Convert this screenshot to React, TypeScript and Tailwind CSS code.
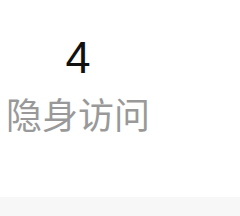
export default function App() {
  return (
    <div className="flex h-[216px] w-[240px] flex-col bg-white">
      <div className="flex h-[197px] flex-col">
        <div className="flex w-[156px] flex-col items-center pt-[31px]">
          <div className="text-[45px] leading-[54px] text-[#111] font-['Liberation_Sans',sans-serif]">4</div>
          <div className="mt-[8px] text-[36px] leading-[40px] text-[#999] font-['Noto_Sans_CJK_SC',sans-serif]">隐身访问</div>
        </div>
      </div>
      <div className="flex-1 bg-[#f7f7f7]" />
    </div>
  );
}
